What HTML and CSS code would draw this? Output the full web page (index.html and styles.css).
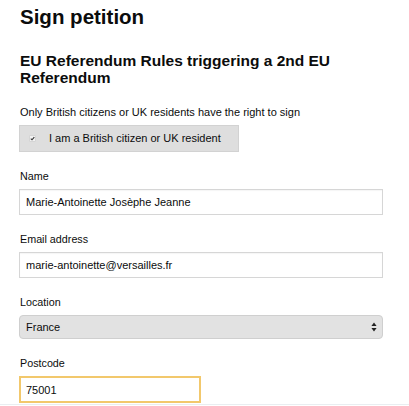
FILE: index.html
```html
<!DOCTYPE html>
<html lang="en">
<head>
<meta charset="utf-8">
<title>Sign petition</title>
<link rel="stylesheet" href="styles.css">
</head>
<body>
<main class="page">
  <h1 class="title">Sign petition</h1>
  <h2 class="subtitle">EU Referendum Rules triggering a 2nd EU Referendum</h2>
  <p class="intro">Only British citizens or UK residents have the right to sign</p>
  <label class="check">
    <span class="check-box">
      <svg width="7" height="7" viewBox="0 0 7 7"><rect x="0.5" y="0.5" width="6" height="6" rx="1" fill="#f2f2f2" stroke="#c8c8c8" stroke-width="0.6"/><path d="M1.8 3.7 L3 4.8 L5.3 2.1" fill="none" stroke="#333" stroke-width="1.1"/></svg>
    </span>
    <span class="check-label">I am a British citizen or UK resident</span>
  </label>

  <div class="field">
    <div class="label">Name</div>
    <div class="input">Marie-Antoinette Josèphe Jeanne</div>
  </div>
  <div class="field">
    <div class="label">Email address</div>
    <div class="input">marie-antoinette@versailles.fr</div>
  </div>
  <div class="field">
    <div class="label">Location</div>
    <div class="select">
      <span>France</span>
      <svg class="arrows" width="6" height="10" viewBox="0 0 6 10"><path d="M3 0.5 L5.6 4 L0.4 4 Z M3 9.5 L5.6 6 L0.4 6 Z" fill="#222"/></svg>
    </div>
  </div>
  <div class="field">
    <div class="label">Postcode</div>
    <div class="input postcode">75001</div>
  </div>
</main>
<div class="rule"></div>
</body>
</html>
```

FILE: styles.css
```css
html, body {
  margin: 0;
  padding: 0;
  background: #ffffff;
}

body {
  font-family: "Liberation Sans", Arial, sans-serif;
  color: #0b0c0c;
  overflow: hidden;
  height: 406px;
}

.page {
  padding: 5px 26px 0 19px;
  width: 364px;
}

.title {
  margin: 0;
  font-size: 20.5px;
  line-height: 24px;
  font-weight: bold;
  padding-left: 1px;
}

.subtitle {
  margin: 23px 0 0;
  font-size: 15.5px;
  line-height: 17px;
  font-weight: bold;
  padding-left: 1px;
}

.intro {
  margin: 19.5px 0 0;
  font-size: 11px;
  line-height: 13px;
  padding-left: 1px;
}

.check {
  display: flex;
  align-items: center;
  box-sizing: border-box;
  width: 220px;
  height: 27px;
  margin-top: 6px;
  background: #dedede;
  border: 1px solid #d2d2d2;
  padding-left: 9px;
}

.check-box {
  display: flex;
  width: 7px;
  height: 7px;
}

.check-label {
  margin-left: 13px;
  font-size: 11px;
  line-height: 13px;
}

.field {
  margin-top: 18.5px;
}

.label {
  font-size: 10.75px;
  line-height: 13px;
  margin-bottom: 5.5px;
  padding-left: 1px;
}

.input {
  box-sizing: border-box;
  height: 26px;
  border: 1px solid #d6d6d6;
  box-shadow: inset 0 1px 1px rgba(0, 0, 0, 0.04);
  padding: 1px 0 0 6px;
  font-size: 11px;
  display: flex;
  align-items: center;
}

.select {
  box-sizing: border-box;
  height: 24px;
  border: 1px solid #cfcfcf;
  border-radius: 4px;
  background: #e2e2e2;
  padding: 0 5px 0 6px;
  font-size: 11px;
  display: flex;
  align-items: center;
  justify-content: space-between;
}

.postcode {
  width: 182px;
  height: 27px;
  border: 2px solid #f2c86c;
  box-shadow: none;
  padding-left: 5px;
}

.rule {
  margin-top: 1px;
  height: 1px;
  background: #e9eef1;
}
```
